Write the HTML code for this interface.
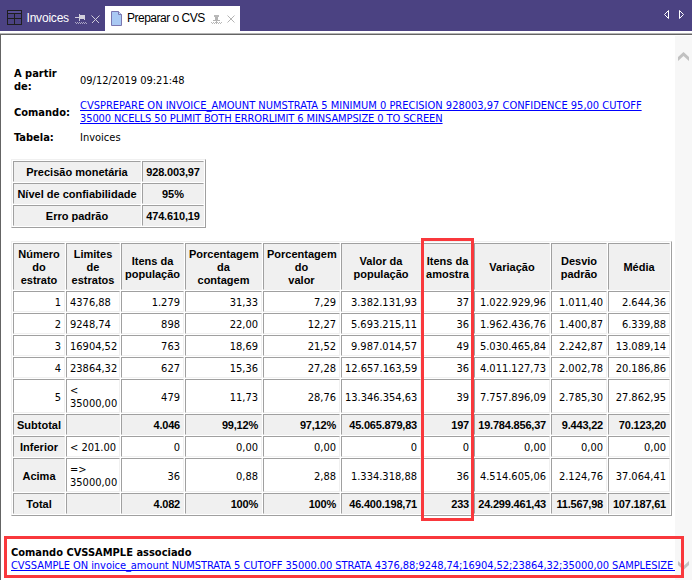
<!DOCTYPE html>
<html lang="pt">
<head>
<meta charset="utf-8">
<title>Preparar o CVS</title>
<style>
html,body{margin:0;padding:0;}
body{width:692px;height:580px;overflow:hidden;background:#fff;position:relative;font-family:"DejaVu Sans Condensed","Liberation Sans",sans-serif;font-size:11px;line-height:13px;color:#000;}
#tabbar{font-family:"Liberation Sans",sans-serif;position:absolute;left:0;top:0;width:692px;height:31px;background:#4b4282;}
#tab1{position:absolute;left:0;top:6px;width:105px;height:25px;color:#fff;font-size:12px;}
#tab2{position:absolute;left:105px;top:6px;width:135px;height:27px;background:#fff;color:#000;font-size:12px;}
.tabtxt{position:absolute;top:5px;white-space:nowrap;line-height:14px;}
#sep1{position:absolute;left:0;top:33px;width:692px;height:1px;background:#b4b4b4;}
#sep2{position:absolute;left:0;top:34px;width:692px;height:1px;background:#646464;}
#lborder{position:absolute;left:0;top:35px;width:1px;height:545px;background:#646464;}
#lborder2{display:none}
#scroll{position:absolute;left:675px;top:36px;width:17px;height:544px;background:#f7f7f7;}
#content{position:absolute;left:2px;top:35px;width:673px;height:545px;overflow:hidden;}
.abs{position:absolute;white-space:nowrap;}
b,.b{font-weight:bold;}
a{color:#0000ff;text-decoration:underline;}
.lnk{letter-spacing:0;}
table.g{position:absolute;border-collapse:separate;border-spacing:1px;border:1px solid;border-color:#f0f0f0 #a0a0a0 #a0a0a0 #f0f0f0;table-layout:fixed;}
table.g td,table.g th{border:1px solid;border-color:#a0a0a0 #f0f0f0 #f0f0f0 #a0a0a0;padding:4px 3px 2px 3px;font-size:11px;line-height:13px;overflow:hidden;white-space:nowrap;}
table.g th{background:#f0f0f0;font-weight:bold;text-align:center;font-family:"Liberation Sans",sans-serif;}
table.g td{text-align:right;background:#fff;}
table.g td.l{text-align:left;}
table.g tr.t td{background:#f0f0f0;font-weight:bold;font-family:"Liberation Sans",sans-serif;letter-spacing:-0.2px;}
.red{position:absolute;border:3px solid #f9383c;box-sizing:border-box;}
</style>
</head>
<body>
<div id="tabbar">
  <div id="tab1">
    <svg style="position:absolute;left:7px;top:4px" width="15" height="15" viewBox="0 0 15 15"><rect x="1" y="1" width="13" height="2" fill="#584e96"/><rect x="0.5" y="0.5" width="14" height="14" fill="none" stroke="#1e1e1e"/><path d="M0 3.5H15M0 8.5H15M7.5 3V15" stroke="#1e1e1e" fill="none"/></svg>
    <span class="tabtxt" style="left:26.5px;letter-spacing:-0.2px;">Invoices</span>
    <svg style="position:absolute;left:75px;top:8px" width="12" height="10" viewBox="0 0 12 10"><path d="M0 3.5H4M4.5 0V7M9.5 1V6" stroke="#d2cfdc" fill="none"/><rect x="5" y="1" width="4" height="4" fill="#d2cfdc"/><path d="M0 8.5H12" stroke="#aaa5c4" stroke-dasharray="1 1" shape-rendering="crispEdges"/><path d="M1 9.5H12" stroke="#aaa5c4" stroke-dasharray="1 1" shape-rendering="crispEdges"/></svg>
    <svg style="position:absolute;left:91px;top:9px" width="9" height="9" viewBox="0 0 9 9"><path d="M0.5 0.5L8 8M8.5 0.5L1 8" stroke="#d0cdda" fill="none"/></svg>
  </div>
  <div id="tab2">
    <svg style="position:absolute;left:6px;top:5px" width="11" height="15" viewBox="0 0 11 15"><path d="M0.5 0.5H7.5L10.5 3.5V14.5H0.5Z" fill="#a9c9f3" stroke="#7a77b0"/><path d="M7.5 0.5V3.5H10.5" fill="#c6dcf8" stroke="#7a77b0"/></svg>
    <span class="tabtxt" style="left:22px;letter-spacing:-0.5px;">Preparar o CVS</span>
    <svg style="position:absolute;left:106px;top:9px" width="11" height="9" viewBox="0 0 11 9" shape-rendering="crispEdges"><rect x="3" y="0" width="5" height="2" fill="#b9b9b9"/><rect x="4" y="2" width="3" height="3" fill="#b4b4b4"/><rect x="2" y="5" width="7" height="1" fill="#b4b4b4"/><rect x="5" y="6" width="1" height="2" fill="#b4b4b4"/><path d="M0 7.5H11" stroke="#b9b9b9" stroke-dasharray="1 1"/><path d="M1 8.5H10" stroke="#b9b9b9" stroke-dasharray="1 1"/></svg>
    <svg style="position:absolute;left:122px;top:9px" width="9" height="9" viewBox="0 0 9 9"><path d="M0.5 0.5L7.5 7.5M7.5 0.5L0.5 7.5" stroke="#b4b4b4" fill="none"/></svg>
  </div>
  <svg style="position:absolute;left:663px;top:9px" width="24" height="11" viewBox="0 0 24 11"><path d="M5.5 1.5V9.5L1.5 5.5Z M16.5 1.5V9.5L20.5 5.5Z" fill="none" stroke="#fff"/></svg>
</div>
<div id="sep1"></div><div id="sep2"></div>
<div id="lborder"></div><div id="lborder2"></div>

<div id="content">
  <div class="abs b" style="left:12px;top:32px;">A partir</div>
  <div class="abs b" style="left:12px;top:45px;">de:</div>
  <div class="abs" style="left:78px;top:39px;">09/12/2019 09:21:48</div>
  <div class="abs b" style="left:12px;top:71px;">Comando:</div>
  <div class="abs lnk" style="left:78px;top:64px;"><a>CVSPREPARE ON INVOICE_AMOUNT NUMSTRATA 5 MINIMUM 0 PRECISION 928003,97 CONFIDENCE 95,00 CUTOFF</a></div>
  <div class="abs lnk" style="left:78px;top:77px;letter-spacing:-0.1px;"><a>35000 NCELLS 50 PLIMIT BOTH ERRORLIMIT 6 MINSAMPSIZE 0 TO SCREEN</a></div>
  <div class="abs b" style="left:12px;top:96px;">Tabela:</div>
  <div class="abs" style="left:78px;top:96px;">Invoices</div>

  <table class="g" style="left:9px;top:124px;width:195px;">
    <colgroup><col style="width:128px"><col style="width:62px"></colgroup>
    <tr><th>Precisão monetária</th><th style="letter-spacing:-0.15px">928.003,97</th></tr>
    <tr><th>Nível de confiabilidade</th><th>95%</th></tr>
    <tr><th>Erro padrão</th><th style="letter-spacing:-0.15px">474.610,19</th></tr>
  </table>

  <table class="g" style="left:9px;top:206px;width:661px;">
    <colgroup><col style="width:52px"><col style="width:54px"><col style="width:63px"><col style="width:77px"><col style="width:77px"><col style="width:80px"><col style="width:51px"><col style="width:76px"><col style="width:56px"><col style="width:62px"></colgroup>
    <tr style="height:47px"><th>Número<br>do<br>estrato</th><th>Limites<br>de<br>estratos</th><th>Itens da<br>população</th><th>Porcentagem<br>da<br>contagem</th><th>Porcentagem<br>do<br>valor</th><th>Valor da<br>população</th><th>Itens da<br>amostra</th><th>Variação</th><th>Desvio<br>padrão</th><th>Média</th></tr>
    <tr><td>1</td><td class="l">4376,88</td><td>1.279</td><td>31,33</td><td>7,29</td><td>3.382.131,93</td><td>37</td><td>1.022.929,96</td><td>1.011,40</td><td>2.644,36</td></tr>
    <tr><td>2</td><td class="l">9248,74</td><td>898</td><td>22,00</td><td>12,27</td><td>5.693.215,11</td><td>36</td><td>1.962.436,76</td><td>1.400,87</td><td>6.339,88</td></tr>
    <tr><td>3</td><td class="l">16904,52</td><td>763</td><td>18,69</td><td>21,52</td><td>9.987.014,57</td><td>49</td><td>5.030.465,84</td><td>2.242,87</td><td>13.089,14</td></tr>
    <tr><td>4</td><td class="l">23864,32</td><td>627</td><td>15,36</td><td>27,28</td><td>12.657.163,59</td><td>36</td><td>4.011.127,73</td><td>2.002,78</td><td>20.186,86</td></tr>
    <tr><td>5</td><td class="l">&lt;<br>35000,00</td><td>479</td><td>11,73</td><td>28,76</td><td>13.346.354,63</td><td>39</td><td>7.757.896,09</td><td>2.785,30</td><td>27.862,95</td></tr>
    <tr class="t"><th>Subtotal</th><td class="l"></td><td>4.046</td><td>99,12%</td><td>97,12%</td><td>45.065.879,83</td><td>197</td><td>19.784.856,37</td><td>9.443,22</td><td>70.123,20</td></tr>
    <tr><th>Inferior</th><td class="l">&lt; 201.00</td><td>0</td><td>0,00</td><td>0,00</td><td>0</td><td>0</td><td>0,00</td><td>0,00</td><td>0,00</td></tr>
    <tr><th>Acima</th><td class="l">=&gt;<br>35000,00</td><td>36</td><td>0,88</td><td>2,88</td><td>1.334.318,88</td><td>36</td><td>4.514.605,06</td><td>2.124,76</td><td>37.064,41</td></tr>
    <tr class="t"><th>Total</th><td class="l"></td><td>4.082</td><td>100%</td><td>100%</td><td>46.400.198,71</td><td>233</td><td>24.299.461,43</td><td>11.567,98</td><td>107.187,61</td></tr>
  </table>

  <div class="abs b" style="left:9px;top:511px;">Comando CVSSAMPLE associado</div>
  <div class="abs lnk" style="left:9px;top:524px;letter-spacing:-0.06px;"><a>CVSSAMPLE ON invoice_amount NUMSTRATA 5 CUTOFF 35000.00 STRATA 4376,88;9248,74;16904,52;23864,32;35000,00 SAMPLESIZE 233</a></div>
</div>

<div id="scroll">
  <svg style="position:absolute;left:3px;top:16px" width="11" height="9" viewBox="0 0 11 9"><path d="M0 5L5.5 0L11 5V9L5.5 4L0 9Z" fill="#c1c1c1"/></svg>
  <svg style="position:absolute;left:3px;top:525px" width="11" height="9" viewBox="0 0 11 9"><path d="M0 0L5.5 5L11 0V4L5.5 9L0 4Z" fill="#c1c1c1"/></svg>
</div>

<div class="red" style="left:421px;top:238px;width:53px;height:283px;"></div>
<div class="red" style="left:4px;top:536px;width:680px;height:42px;"></div>
</body>
</html>
